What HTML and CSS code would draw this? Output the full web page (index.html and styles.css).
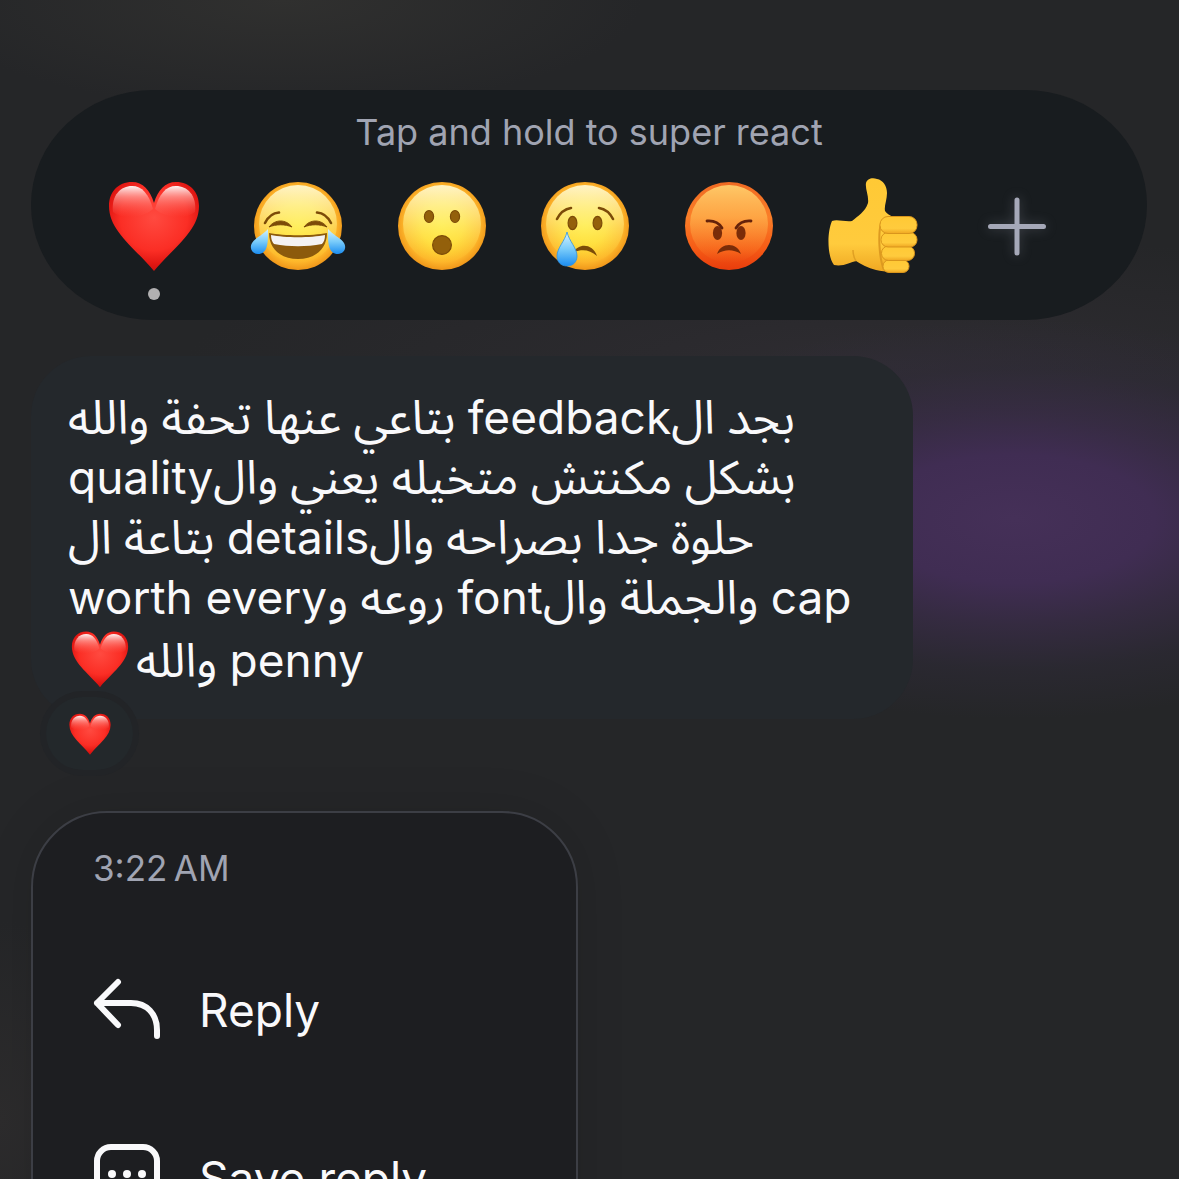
FILE: index.html
```html
<!DOCTYPE html>
<html lang="ar">
<head>
  <meta charset="UTF-8">
  <meta name="viewport" content="width=device-width, initial-scale=1">
  <title>Message reactions</title>
  <link rel="stylesheet" href="styles.css">
</head>
<body>

  <!-- shared shapes and gradients -->
  <svg class="defs" width="0" height="0" aria-hidden="true">
    <defs>
      <radialGradient id="heartFill" cx="0.5" cy="0.4" r="0.62">
        <stop offset="0" stop-color="#ff4a40"/>
        <stop offset="0.6" stop-color="#fb2e25"/>
        <stop offset="0.85" stop-color="#e01612"/>
        <stop offset="1" stop-color="#c80f0e"/>
      </radialGradient>
      <linearGradient id="heartShine" x1="0" y1="0" x2="0" y2="1">
        <stop offset="0" stop-color="#fff" stop-opacity="0.95"/>
        <stop offset="0.35" stop-color="#ffa8a2" stop-opacity="0.7"/>
        <stop offset="1" stop-color="#ff5a50" stop-opacity="0"/>
      </linearGradient>
      <radialGradient id="face" cx="0.5" cy="0.48" r="0.54">
        <stop offset="0" stop-color="#ffec3c"/>
        <stop offset="0.45" stop-color="#ffdb35"/>
        <stop offset="0.8" stop-color="#fdb52a"/>
        <stop offset="1" stop-color="#ec8f16"/>
      </radialGradient>
      <linearGradient id="faceShine" x1="0" y1="0" x2="0" y2="1">
        <stop offset="0" stop-color="#fffbd8" stop-opacity="0.9"/>
        <stop offset="0.4" stop-color="#fff49a" stop-opacity="0.6"/>
        <stop offset="1" stop-color="#ffe83c" stop-opacity="0"/>
      </linearGradient>
      <linearGradient id="angryFace" x1="0" y1="0" x2="0" y2="1">
        <stop offset="0" stop-color="#f06a22"/>
        <stop offset="0.4" stop-color="#fa7e28"/>
        <stop offset="0.75" stop-color="#f65c16"/>
        <stop offset="1" stop-color="#e83c0c"/>
      </linearGradient>
      <linearGradient id="angryShine" x1="0" y1="0" x2="0" y2="1">
        <stop offset="0" stop-color="#ffc968"/>
        <stop offset="0.4" stop-color="#ffb04c" stop-opacity="0.8"/>
        <stop offset="1" stop-color="#fb8a30" stop-opacity="0"/>
      </linearGradient>
      <linearGradient id="tear" x1="0" y1="0" x2="0" y2="1">
        <stop offset="0" stop-color="#d5f2ff"/>
        <stop offset="0.5" stop-color="#7accfa"/>
        <stop offset="1" stop-color="#1b8df0"/>
      </linearGradient>
      <linearGradient id="hand" x1="0" y1="0" x2="0" y2="1">
        <stop offset="0" stop-color="#ffc935"/>
        <stop offset="0.7" stop-color="#ffcb3d"/>
        <stop offset="1" stop-color="#efa722"/>
      </linearGradient>
    </defs>
    <symbol id="heart" viewBox="0 0 96 96">
      <path d="M48 25C44 12 37 4 26 4C12 4 3 14 3 28C3 53 28 69 48 93C68 69 93 53 93 28C93 14 84 4 70 4C59 4 52 12 48 25Z" fill="url(#heartFill)"/>
      <path d="M7 34C5 17 15 8 26 8C36 8 43 16 47 31C37 40 17 42 7 34Z" fill="url(#heartShine)"/>
      <path d="M89 34C91 17 81 8 70 8C60 8 53 16 49 31C59 40 79 42 89 34Z" fill="url(#heartShine)"/>
    </symbol>
  </svg>

  <main class="screen">

    <section class="reactions" aria-label="Reactions">
      <p class="hint">Tap and hold to super react</p>
      <div class="emoji-row">
        <button class="emoji" type="button" aria-label="Love" aria-pressed="true">
          <svg viewBox="0 0 96 96"><use href="#heart"/></svg>
          <span class="dot"></span>
        </button>

        <button class="emoji" type="button" aria-label="Laugh">
          <svg viewBox="0 0 96 96">
            <circle cx="48" cy="48" r="44" fill="url(#face)"/>
            <circle cx="48" cy="46" r="39" fill="url(#faceShine)"/>
            <g fill="none" stroke="#7c4b08" stroke-linecap="round" stroke-width="2.6">
              <path d="M15 45C18 39 23 35 29 34.500"/>
              <path d="M81 45C78 39 73 35 67 34.500"/>
            </g>
            <path d="M19 49C25 41 36 41 42 49C35 46 26 46 19 49Z" fill="#7c4b08" stroke="#7c4b08" stroke-width="1"/>
            <path d="M77 49C71 41 60 41 54 49C61 46 70 46 77 49Z" fill="#7c4b08" stroke="#7c4b08" stroke-width="1"/>
            <path d="M19 55C34 58 62 58 77 55C77 71 65 81 48 81C31 81 19 71 19 55Z" fill="#8c5a0c"/>
            <path d="M21 57C35 60 61 60 75 57C75 61 74 64 72 66C56 69 40 69 24 66C22 64 21 61 21 57Z" fill="#f4f2f2"/>
            <path d="M18 51C18 61 19 76 8 76C2 76 -1 70 2 65C5 60 13 57 18 51Z" fill="url(#tear)"/>
            <path d="M78 51C78 61 77 76 88 76C94 76 97 70 94 65C91 60 83 57 78 51Z" fill="url(#tear)"/>
          </svg>
        </button>

        <button class="emoji" type="button" aria-label="Wow">
          <svg viewBox="0 0 96 96">
            <circle cx="48" cy="48" r="44" fill="url(#face)"/>
            <circle cx="48" cy="46" r="39" fill="url(#faceShine)"/>
            <g fill="#93600b" stroke="#7c4b08" stroke-width="1.200">
              <ellipse cx="35" cy="38.500" rx="4.600" ry="6"/>
              <ellipse cx="61" cy="38.500" rx="4.600" ry="6"/>
              <circle cx="48" cy="67" r="9.400"/>
            </g>
          </svg>
        </button>

        <button class="emoji" type="button" aria-label="Sad">
          <svg viewBox="0 0 96 96">
            <circle cx="48" cy="48" r="44" fill="url(#face)"/>
            <circle cx="48" cy="46" r="39" fill="url(#faceShine)"/>
            <g fill="none" stroke="#7c4b08" stroke-linecap="round" stroke-width="2.6">
              <path d="M20 41C23 35 28 31 34 30"/>
              <path d="M76 41C73 35 68 31 62 30"/>
            </g>
            <g fill="#93600b" stroke="#7c4b08" stroke-width="1.200">
              <ellipse cx="35.500" cy="45" rx="4.400" ry="6.600"/>
              <ellipse cx="60.500" cy="45" rx="4.400" ry="6.600"/>
            </g>
            <path d="M37 74C41 65 56 65 60 78C53 72 46 71 37 74Z" fill="#7c4b08"/>
            <path d="M30 54C32 63 40 70 40 78C40 84 36 88 30 88C24 88 20 84 20 78C20 70 28 63 30 54Z" fill="url(#tear)" stroke="#2d93e6" stroke-width="0.800"/>
          </svg>
        </button>

        <button class="emoji" type="button" aria-label="Angry">
          <svg viewBox="0 0 96 96">
            <circle cx="48" cy="48" r="44" fill="url(#angryFace)"/>
            <circle cx="48" cy="46" r="39" fill="url(#angryShine)"/>
            <g fill="#7a2c08">
              <ellipse cx="36.500" cy="55" rx="4.600" ry="7"/>
              <ellipse cx="60" cy="55" rx="4.600" ry="7"/>
              <path d="M36 76C40 64 56 64 60 76C52 71 44 71 36 76Z"/>
            </g>
            <g fill="none" stroke="#65220a" stroke-linecap="round" stroke-width="2.800">
              <path d="M26 43C32 42.500 38 45 41 50"/>
              <path d="M70 43C64 42.500 58 45 55 50"/>
            </g>
          </svg>
        </button>

        <button class="emoji" type="button" aria-label="Like">
          <svg viewBox="0 0 96 96">
            <path d="M7 43C12 41 20 44 27 43C33 38 40 34 43 25C44 18 40 11 41 5C42 1 47 -1 52 1C58 2 62 8 62 15C62 22 59 28 60 33C62 36 65 37 68 39L76 92C70 95 60 94 51 92C43 90 36 86 31 83C26 84 18 89 9 87C2 78 2 54 7 43Z" fill="url(#hand)"/>
            <path d="M28 72C28 76 29 80 31 83" fill="none" stroke="#e0a023" stroke-width="1.500"/>
            <path d="M56 45C53 56 54 80 59 92" fill="none" stroke="#dd9a20" stroke-width="2"/>
            <g fill="url(#hand)" stroke="#d9951c" stroke-width="1">
              <rect x="58" y="82" width="26" height="12.500" rx="6"/>
              <rect x="56.500" y="68" width="33" height="14.500" rx="7"/>
              <rect x="56" y="54.500" width="36" height="14.500" rx="7"/>
              <rect x="55" y="38.500" width="37" height="17" rx="8"/>
            </g>
          </svg>
        </button>

        <button class="emoji" type="button" aria-label="More reactions">
          <svg viewBox="0 0 96 96" fill="none" stroke="#a5a8b8" stroke-width="5" stroke-linecap="round">
            <path class="plus" d="M48 22V75M21.500 48.500H74.500"/>
          </svg>
        </button>
      </div>
    </section>

    <article class="bubble">
      <p class="message" dir="rtl">
        بجد ال<bdo class="latin" dir="ltr">feedback</bdo> بتاعي عنها تحفة والله<br>
        بشكل مكنتش متخيله يعني وال<bdo class="latin" dir="ltr">quality</bdo><br>
        حلوة جدا بصراحه وال<bdo class="latin" dir="ltr">details</bdo> بتاعة ال<br>
        <bdo class="latin" dir="ltr">cap</bdo> والجملة وال<bdo class="latin" dir="ltr">font</bdo> روعه و<bdo class="latin" dir="ltr">worth every</bdo><br>
        <bdo class="latin" dir="ltr">penny</bdo> والله<svg class="inline-heart" role="img" aria-label="heart"><use href="#heart"/></svg>
      </p>
      <button class="reaction" type="button" aria-label="Love reaction">
        <svg class="reaction-heart"><use href="#heart"/></svg>
      </button>
    </article>

    <nav class="menu" aria-label="Message actions">
      <time class="time" datetime="03:22">3:22&#8201;AM</time>
      <button class="menu-item" type="button">
        <svg class="menu-icon" viewBox="0 0 68 68">
          <path d="M25 6L4 27L25 49M4 27H38C54 27 64 38 64 54V60"/>
        </svg>
        Reply
      </button>
      <button class="menu-item" type="button">
        <svg class="menu-icon" viewBox="0 0 68 68">
          <rect x="4" y="3" width="60" height="60" rx="14"/>
          <g fill="#f9f9fb" stroke="none">
            <circle cx="19" cy="30" r="4"/>
            <circle cx="34" cy="30" r="4"/>
            <circle cx="49" cy="30" r="4"/>
          </g>
        </svg>
        Save reply
      </button>
    </nav>

  </main>

</body>
</html>
```
FILE: styles.css
```css
* {
  box-sizing: border-box;
}
body {
  margin: 0;
  height: 100vh;
  overflow: hidden;
  font-family: Inter, "Noto Sans", sans-serif;
  color: #f9f9fb;
  background:
    radial-gradient(ellipse 440px 200px at 86% 44%, #453058 0%, #402d53 32%, rgba(60, 45, 76, 0.7) 52%, rgba(50, 44, 62, 0.4) 75%, transparent 100%),
    radial-gradient(ellipse 700px 130px at 75% 31%, #2e2c31, transparent),
    radial-gradient(ellipse 360px 110px at 24% 0%, #30302f, transparent),
    radial-gradient(ellipse 130px 200px at 0% 95%, #2d2c2d, transparent),
    #252628;
}
button {
  padding: 0;
  border: none;
  background: none;
  color: inherit;
  font: inherit;
  cursor: pointer;
}
p {
  margin: 0;
}
.defs {
  position: absolute;
}
.screen {
  padding: 90px 32px 0 31px;
}

/* reaction bar */
.reactions {
  padding: 20px 58px 20px 51px;
  border-radius: 122px / 115px;
  background: #181c1f;
}
.hint {
  margin-bottom: 24px;
  padding-left: 7px;
  text-align: center;
  font-size: 36px;
  line-height: 44px;
  color: #a0a4b2;
}
.emoji-row {
  display: grid;
  grid-template-columns: repeat(7, 1fr);
}
.emoji {
  display: flex;
  flex-direction: column;
  align-items: center;
  gap: 14px;
}
.emoji svg {
  width: 96px;
  height: 96px;
}
.plus {
  filter: drop-shadow(0 0 6px rgba(165, 168, 184, 0.3));
}
.dot {
  width: 12px;
  height: 12px;
  border-radius: 50%;
  background: #b1b0b1;
}

/* message */
.bubble {
  position: relative;
  width: 79%;
  margin-top: 36px;
  padding: 33px 37px 27px;
  border-radius: 60px;
  background: #24282c;
}
.message {
  text-align: left;
  white-space: nowrap;
  font-family: "Noto Sans Arabic", "DejaVu Sans", sans-serif;
  font-size: 47px;
  line-height: 60px;
}
.latin {
  font-family: Inter, sans-serif;
  font-size: 46px;
  line-height: 1;
}
.inline-heart {
  width: 64px;
  height: 60px;
  margin-right: 4px;
  vertical-align: -12px;
}
.reaction {
  position: absolute;
  left: 15px;
  bottom: -51px;
  display: flex;
  align-items: center;
  justify-content: center;
  width: 87px;
  height: 73px;
  border-radius: 37px;
  background: #23282b;
  box-shadow: 0 0 0 6px #222427;
}
.reaction-heart {
  width: 44px;
  height: 44px;
}

/* context menu */
.menu {
  display: flex;
  flex-direction: column;
  width: 49%;
  margin-top: 92px;
  padding: 33px 60px;
  border: 2px solid #3c3e45;
  border-radius: 76px;
  background: #1d1e21;
  box-shadow: 0 0 50px rgba(0, 0, 0, 0.12);
}
.time {
  margin-bottom: 36px;
  font-size: 35px;
  line-height: 44px;
  color: #a0a4b2;
}
.menu-item {
  display: flex;
  align-items: center;
  gap: 38px;
  height: 168px;
  font-size: 46px;
}
.menu-icon {
  width: 68px;
  height: 68px;
  fill: none;
  stroke: #f9f9fb;
  stroke-width: 6;
  stroke-linecap: round;
  stroke-linejoin: round;
}
```
